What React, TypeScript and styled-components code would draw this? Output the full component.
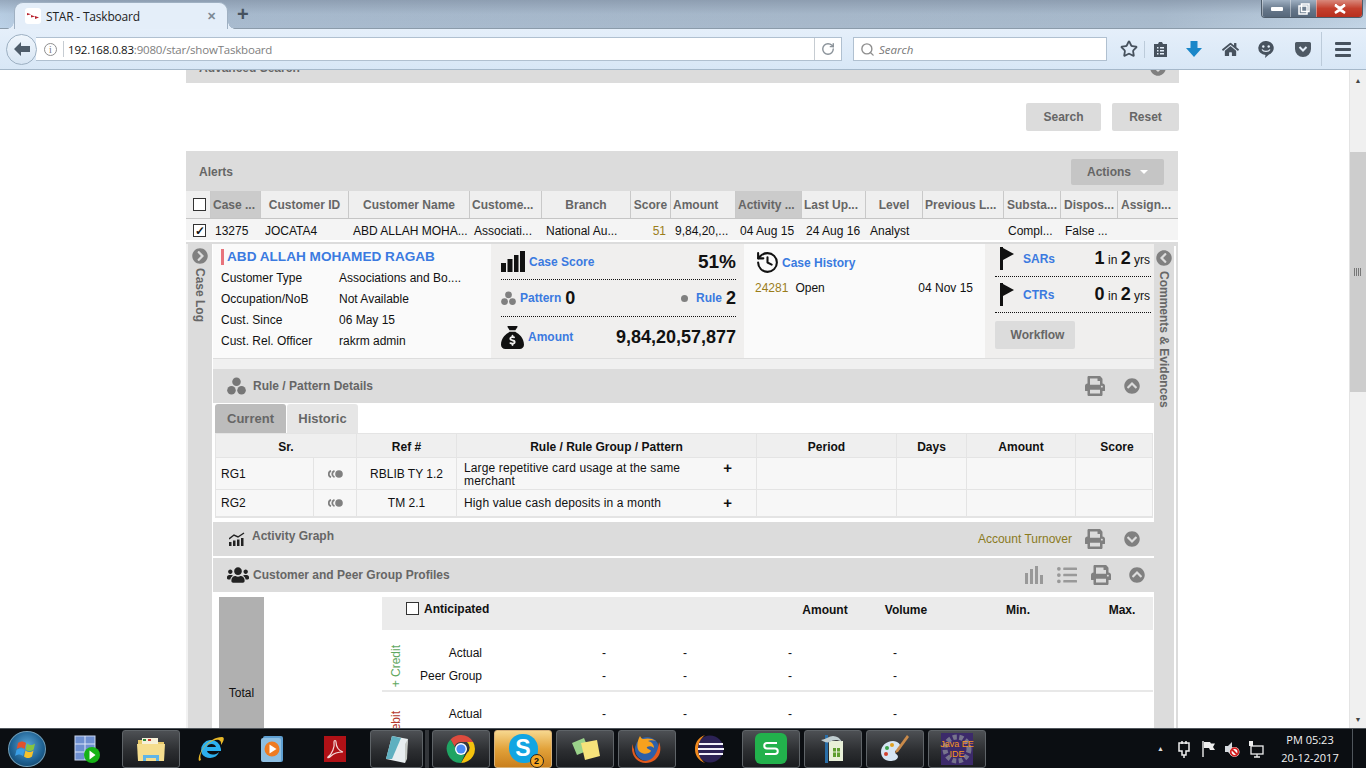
import React from 'react'
import styled, { createGlobalStyle } from 'styled-components'
import {
  FaChevronCircleDown,
  FaChevronCircleLeft,
  FaChevronCircleRight,
  FaChevronCircleUp,
  FaHome,
  FaListUl,
  FaPrint,
  FaUsers,
} from 'react-icons/fa'
import { FaSackDollar } from 'react-icons/fa6'
import { History, RotateCw, Search as SearchGlass, Star } from 'lucide-react'

const GlobalStyle = createGlobalStyle`
  html, body {
    margin: 0;
    padding: 0;
    height: 100%;
    overflow: hidden;
    background: #fff;
  }
  * { box-sizing: border-box; }
`

const columns = '24px 50px 88px 121px 72px 89px 40px 65px 66px 64px 57px 81px 57px 57px 57px 1fr'

const headers = [
  { text: 'Case ...', sorted: true, left: true },
  { text: 'Customer ID' },
  { text: 'Customer Name' },
  { text: 'Custome...', left: true },
  { text: 'Branch' },
  { text: 'Score' },
  { text: 'Amount', left: true },
  { text: 'Activity ...', sorted: true, left: true },
  { text: 'Last Up...', left: true },
  { text: 'Level' },
  { text: 'Previous L...', left: true },
  { text: 'Substa...' },
  { text: 'Dispos...' },
  { text: 'Assign...' },
]

const rowValues = [
  '13275',
  'JOCATA4',
  'ABD ALLAH MOHA...',
  'Associati...',
  'National Au...',
  '51',
  '9,84,20,...',
  '04 Aug 15',
  '24 Aug 16',
  'Analyst',
  '',
  'Compl...',
  'False ...',
  '',
]

const customerFacts = [
  ['Customer Type', 'Associations and Bo....'],
  ['Occupation/NoB', 'Not Available'],
  ['Cust. Since', '06 May 15'],
  ['Cust. Rel. Officer', 'rakrm admin'],
]

const rules = [
  { sr: 'RG1', ref: 'RBLIB TY 1.2', rule: 'Large repetitive card usage at the same merchant', h: 32 },
  { sr: 'RG2', ref: 'TM 2.1', rule: 'High value cash deposits in a month', h: 27 },
]

export default function App() {
  return (
    <Screen>
      <GlobalStyle />
      <TabStrip>
        <Tab>
          <Favicon>
            <svg width="12" height="8" viewBox="0 0 12 8">
              <path d="M0 1l4 1.2-4 1zM4 3l4 1.4-4 1.2zM8 4l4 1.4-4 1.6z" fill="#b8202c" />
            </svg>
          </Favicon>
          <TabTitle>STAR - Taskboard</TabTitle>
          <TabClose>✕</TabClose>
        </Tab>
        <NewTab>+</NewTab>
        <WindowButtons>
          <WindowButton $w={28}>
            <svg width="12" height="4"><rect width="12" height="4" rx="1" fill="#fff" /></svg>
          </WindowButton>
          <WindowButton $w={26}>
            <svg width="12" height="12" viewBox="0 0 12 12" fill="none" stroke="#fff" strokeWidth="1.5">
              <rect x="1" y="3" width="8" height="8" fill="#6f8092" />
              <rect x="3.5" y="1" width="7.5" height="7.5" />
            </svg>
          </WindowButton>
          <WindowButton $w={46} $close>
            <svg width="14" height="10" viewBox="0 0 14 10">
              <path d="M2 1l5 3 5-3M2 9l5-3 5 3M2 1l10 8M12 1L2 9" stroke="#fff" strokeWidth="2.4" fill="none" />
            </svg>
          </WindowButton>
        </WindowButtons>
      </TabStrip>

      <NavBar>
        <BackButton>
          <svg width="18" height="16" viewBox="0 0 18 16">
            <path d="M8 1L1 8l7 7v-4h9V5H8z" fill="#4e5c6a" />
          </svg>
        </BackButton>
        <UrlBox>
          <InfoIcon>i</InfoIcon>
          <UrlDivider />
          <UrlHost>192.168.0.83</UrlHost>
          <UrlPath>:9080/star/showTaskboard</UrlPath>
          <ReloadCell>
            <RotateCw size={14} color="#8a9299" strokeWidth={2.4} />
          </ReloadCell>
        </UrlBox>
        <SearchBox>
          <SearchGlass size={15} color="#8e8e8e" strokeWidth={2.2} />
          <SearchHint>Search</SearchHint>
        </SearchBox>
        <ToolIcons>
          <ToolIcon $w={30}>
            <Star size={18} color="#47525e" strokeWidth={2.4} />
          </ToolIcon>
          <ToolDivider />
          <ToolIcon $w={30}>
            <svg width="15" height="17" viewBox="0 0 15 17">
              <path d="M1 3h4l1-2h3l1 2h4v13H1z" fill="#47525e" />
              <path d="M4 6h1.5v1.5H4zM7 6h4v1.5H7zM4 9h1.5v1.5H4zM7 9h4v1.5H7zM4 12h1.5v1.5H4zM7 12h4v1.5H7z" fill="#e4eef9" />
            </svg>
          </ToolIcon>
          <ToolIcon $w={37}>
            <svg width="16" height="16" viewBox="0 0 16 16">
              <path d="M4.5 0h7v7H16l-8 9-8-9h4.5z" fill="#1a87c9" />
            </svg>
          </ToolIcon>
          <ToolIcon $w={36}>
            <FaHome size={17} color="#47525e" />
          </ToolIcon>
          <ToolIcon $w={36}>
            <svg width="16" height="17" viewBox="0 0 16 17">
              <path d="M8 0a7.5 7 0 0 1 3 13.5L7 17l.5-3A7.5 7 0 0 1 8 0z" fill="#47525e" />
              <circle cx="5.3" cy="5.5" r="1.2" fill="#e4eef9" />
              <circle cx="10.7" cy="5.5" r="1.2" fill="#e4eef9" />
              <path d="M4 8.5c1.5 2.6 6.500 2.600 8 0" stroke="#e4eef9" strokeWidth="1.3" fill="none" />
            </svg>
          </ToolIcon>
          <ToolIcon $w={37}>
            <svg width="16" height="15" viewBox="0 0 16 15">
              <path d="M1.500 0h13A1.500 1.500 0 0 1 16 1.500V7A8 8 0 0 1 0 7V1.500A1.500 1.500 0 0 1 1.500 0z" fill="#4e5964" />
              <path d="M4.500 5L8 8.500 11.500 5" stroke="#e4eef9" strokeWidth="2" fill="none" />
            </svg>
          </ToolIcon>
          <ToolDivider $tall />
          <MenuIcon>
            <span />
            <span />
            <span />
          </MenuIcon>
        </ToolIcons>
      </NavBar>

      <Viewport>
        <Page>
          <PageColumn>
            <AdvancedBar>
              <AdvancedTitle>Advanced Search</AdvancedTitle>
              <FaChevronCircleDown size={16} color="#808080" />
            </AdvancedBar>
            <SearchActions>
              <GrayButton $w={75}>Search</GrayButton>
              <GrayButton $w={67}>Reset</GrayButton>
            </SearchActions>
            <AlertsPanel>
              <AlertsHead>
                <AlertsTitle>Alerts</AlertsTitle>
                <ActionsButton>
                  Actions
                  <Caret />
                </ActionsButton>
              </AlertsHead>
              <GridHead>
                <CheckCell>
                  <Checkbox />
                </CheckCell>
                {headers.map((h) => (
                  <HeadCell key={h.text} $sorted={h.sorted} $left={h.left}>
                    {h.text}
                  </HeadCell>
                ))}
              </GridHead>
              <GridRow>
                <CheckCell>
                  <Checkbox $checked>✓</Checkbox>
                </CheckCell>
                {rowValues.map((v, i) => (
                  <RowCell key={i} $score={v === '51'}>
                    {v}
                  </RowCell>
                ))}
              </GridRow>
              <RowGap />
              <AlertBody>
                <LeftRail>
                  <FaChevronCircleRight size={16} color="#808080" />
                  <RailText>Case Log</RailText>
                </LeftRail>
                <MainColumn>
                  <Summary>
                    <CustomerBlock>
                      <CustomerName>ABD ALLAH MOHAMED RAGAB</CustomerName>
                      {customerFacts.map(([label, value]) => (
                        <FactRow key={label}>
                          <FactLabel>{label}</FactLabel>
                          <span>{value}</span>
                        </FactRow>
                      ))}
                    </CustomerBlock>
                    <MetricsBlock>
                      <MetricRow $h={36} $line>
                        <MetricLeft>
                          <BarsIcon />
                          <BlueLink>Case Score</BlueLink>
                        </MetricLeft>
                        <BigValue>51%</BigValue>
                      </MetricRow>
                      <MetricRow $h={37} $line>
                        <MetricLeft>
                          <PatternIcon size={15} color="#808080" />
                          <BlueLink>Pattern</BlueLink>
                          <MidValue>0</MidValue>
                        </MetricLeft>
                        <MetricLeft>
                          <SmallDot />
                          <BlueLink>Rule</BlueLink>
                          <MidValue>2</MidValue>
                        </MetricLeft>
                      </MetricRow>
                      <MetricRow $h={40}>
                        <MetricLeft>
                          <FaSackDollar size={23} color="#111" />
                          <BlueLink>Amount</BlueLink>
                        </MetricLeft>
                        <MidValue>9,84,20,57,877</MidValue>
                      </MetricRow>
                    </MetricsBlock>
                    <HistoryBlock>
                      <HistoryHead>
                        <History size={25} color="#111" strokeWidth={2} />
                        <BlueLink>Case History</BlueLink>
                      </HistoryHead>
                      <HistoryRow>
                        <GoldText>24281</GoldText>
                        <HistoryStatus>Open</HistoryStatus>
                        <span>04 Nov 15</span>
                      </HistoryRow>
                    </HistoryBlock>
                    <FlagsBlock>
                      <FlagRow $h={33} $lift={3}>
                        <FlagIcon />
                        <BlueLink>SARs</BlueLink>
                        <FlagCount>
                          <b>1</b> in <b>2</b> yrs
                        </FlagCount>
                      </FlagRow>
                      <FlagRow $h={36} $lift={0}>
                        <FlagIcon />
                        <BlueLink>CTRs</BlueLink>
                        <FlagCount>
                          <b>0</b> in <b>2</b> yrs
                        </FlagCount>
                      </FlagRow>
                      <WorkflowButton>Workflow</WorkflowButton>
                    </FlagsBlock>
                  </Summary>
                  <Strip />
                  <SectionHead>
                    <SectionTitle $gap={7}>
                      <PatternIcon size={19} color="#777" />
                      <SectionLabel>Rule / Pattern Details</SectionLabel>
                    </SectionTitle>
                    <SectionTools>
                      <FaPrint size={20} color="#808080" />
                      <Spacer $w={19} />
                      <FaChevronCircleUp size={16} color="#808080" />
                      <Spacer $w={14} />
                    </SectionTools>
                  </SectionHead>
                  <Tabs>
                    <TabButton $active>Current</TabButton>
                    <TabButton>Historic</TabButton>
                  </Tabs>
                  <RuleTable>
                    <colgroup>
                      <col width="98" />
                      <col width="43" />
                      <col width="100" />
                      <col width="300" />
                      <col width="140" />
                      <col width="70" />
                      <col width="109" />
                      <col width="77" />
                    </colgroup>
                    <thead>
                      <tr>
                        <RuleHead colSpan={2}>Sr.</RuleHead>
                        <RuleHead>Ref #</RuleHead>
                        <RuleHead>Rule / Rule Group / Pattern</RuleHead>
                        <RuleHead>Period</RuleHead>
                        <RuleHead>Days</RuleHead>
                        <RuleHead>Amount</RuleHead>
                        <RuleHead $shift>Score</RuleHead>
                      </tr>
                    </thead>
                    <tbody>
                      {rules.map((r) => (
                        <RuleRow key={r.sr} $h={r.h}>
                          <RuleCell>{r.sr}</RuleCell>
                          <RuleCell $center>
                            <TrailDots />
                          </RuleCell>
                          <RuleCell $center>{r.ref}</RuleCell>
                          <RuleCell>
                            <RuleText>
                              <RuleWords>{r.rule}</RuleWords>
                              <PlusMark>+</PlusMark>
                            </RuleText>
                          </RuleCell>
                          <RuleCell />
                          <RuleCell />
                          <RuleCell />
                          <RuleCell />
                        </RuleRow>
                      ))}
                    </tbody>
                  </RuleTable>
                  <SectionHead $top={4}>
                    <SectionTitle $gap={7} $inset={2}>
                      <GraphIcon />
                      <SectionLabel $raise={6}>Activity Graph</SectionLabel>
                    </SectionTitle>
                    <SectionTools>
                      <TurnoverLink>Account Turnover</TurnoverLink>
                      <FaPrint size={20} color="#808080" />
                      <Spacer $w={19} />
                      <FaChevronCircleDown size={16} color="#808080" />
                      <Spacer $w={14} />
                    </SectionTools>
                  </SectionHead>
                  <SectionHead $top={2}>
                    <SectionTitle $gap={4}>
                      <FaUsers size={22} color="#222" />
                      <SectionLabel>Customer and Peer Group Profiles</SectionLabel>
                    </SectionTitle>
                    <SectionTools>
                      <ChartIcon />
                      <Spacer $w={14} />
                      <FaListUl size={20} color="#999" />
                      <Spacer $w={14} />
                      <FaPrint size={20} color="#808080" />
                      <Spacer $w={18} />
                      <FaChevronCircleUp size={16} color="#808080" />
                      <Spacer $w={9} />
                    </SectionTools>
                  </SectionHead>
                  <Profiles>
                    <TotalBlock>Total</TotalBlock>
                    <ProfileTable>
                      <AnticipatedBar>
                        <AnticipatedLabel>
                          <Checkbox />
                          Anticipated
                        </AnticipatedLabel>
                        <AnticipatedCol $w={74}>Amount</AnticipatedCol>
                        <AnticipatedCol $w={88}>Volume</AnticipatedCol>
                        <AnticipatedCol $w={136}>Min.</AnticipatedCol>
                        <AnticipatedCol $w={60} $gap={6}>Max.</AnticipatedCol>
                      </AnticipatedBar>
                      <ProfileGroup $head={12} $line>
                        <SideLabel $tone="#5fa85f">+ Credit</SideLabel>
                        <ProfileRowCells label="Actual" />
                        <ProfileRowCells label="Peer Group" />
                      </ProfileGroup>
                      <ProfileGroup $head={11}>
                        <SideLabel $tone="#b5392b" $top>- Debit</SideLabel>
                        <ProfileRowCells label="Actual" />
                        <ProfileRowCells label="Peer Group" />
                      </ProfileGroup>
                    </ProfileTable>
                  </Profiles>
                </MainColumn>
                <RightRail>
                  <FaChevronCircleLeft size={16} color="#808080" />
                  <RailText>Comments &amp; Evidences</RailText>
                </RightRail>
              </AlertBody>
            </AlertsPanel>
          </PageColumn>
        </Page>
        <Scrollbar>
          <ScrollArrow>▲</ScrollArrow>
          <ScrollThumb>
            <ScrollGrip />
          </ScrollThumb>
          <ScrollArrow $bottom>▼</ScrollArrow>
        </Scrollbar>
      </Viewport>

      <Taskbar>
        <StartOrb>
          <svg width="24" height="24" viewBox="0 0 24 24">
            <path d="M3 6c3-2 5-2 8 0l-1.300 6c-3-2-5-2-8 0z" fill="#e2512c" />
            <path d="M12 6.500c3 2 5 2 8 0l-1.300 6c-3 2-5 2-8 0z" fill="#86c440" />
            <path d="M1.500 13c3-2 5-2 8 0L8 19c-3-2-5-2-8 0z" fill="#3a9ee6" />
            <path d="M10.500 13.500c3 2 5 2 8 0L17 19.500c-3 2-5 2-8 0z" fill="#f6c22c" />
          </svg>
        </StartOrb>
        <TaskSlot>
          <svg width="26" height="30" viewBox="0 0 26 30">
            <rect x="1" y="2" width="20" height="24" fill="#6e8fd0" stroke="#c9d6f0" />
            <path d="M1 10h20M1 18h20M11 2v24" stroke="#dde6f8" />
            <circle cx="18" cy="21" r="8" fill="#16b316" />
            <path d="M15.500 16.500l6 4.500-6 4.500z" fill="#fff" />
          </svg>
        </TaskSlot>
        <TaskSlot $boxed $nudge={2}>
          <svg width="30" height="28" viewBox="0 0 30 28">
            <path d="M2 5h8l2 2h16v19H2z" fill="#e8c96a" />
            <rect x="6" y="3" width="16" height="6" fill="#f6f0d8" />
            <rect x="7" y="4" width="3" height="2" fill="#2e8b3a" />
            <rect x="12" y="4" width="3" height="2" fill="#cc3a30" />
            <path d="M1 9h28l-1 17H2z" fill="#f5dd8e" />
            <path d="M7 20h16v6h-3v-3H10v3H7z" fill="#5fb5e8" />
          </svg>
        </TaskSlot>
        <TaskSlot>
          <svg width="30" height="30" viewBox="0 0 30 30">
            <path d="M5 17a10 10 0 0 1 20-2v2H11c1 4 8 5 12 1-2 7-13 8-17 2z" fill="#2cb0ee" />
            <path d="M11 13h9c-1-4-8-4-9 0z" fill="#0b0e12" />
            <path d="M3 27C1 19 13 3 26 3c3 0 2 4-1 8C26 5 20 4 13 9 6 14 3 21 5 26z" fill="#e8b829" />
          </svg>
        </TaskSlot>
        <TaskSlot>
          <svg width="26" height="30" viewBox="0 0 26 30">
            <rect x="3" y="2" width="20" height="26" rx="2" fill="#5f9fd1" />
            <rect x="1" y="4" width="20" height="24" rx="2" fill="#8ebfe2" />
            <circle cx="12" cy="15" r="7.500" fill="#ef7b21" />
            <path d="M9.500 10.500l7 4.500-7 4.500z" fill="#fff" />
          </svg>
        </TaskSlot>
        <TaskSlot>
          <svg width="26" height="30" viewBox="0 0 26 30">
            <rect x="2" y="2" width="22" height="26" fill="#b01116" />
            <path d="M6 23c4-3 7-10 6-15 0-2 2-2 2 0 0 5 3 9 7 10-4 0-9 1-12 4-2 2-4 2-3 1z" fill="none" stroke="#f4d9d9" strokeWidth="1.200" />
          </svg>
        </TaskSlot>
        <TaskSlot $boxed $w={53} $nudge={2}>
          <svg width="28" height="30" viewBox="0 0 28 30">
            <path d="M9 2l16 3-3 24-19-4z" fill="#e8eef0" />
            <path d="M9 2l9 2L9 25l-6 0z" fill="#5fb0c0" />
            <path d="M22 10l3-5-1 20-2 4z" fill="#c5c9c5" />
          </svg>
        </TaskSlot>
        <Gripper />
        <TaskSlot $boxed>
          <svg width="30" height="30" viewBox="0 0 30 30">
            <path d="M15 1a14 14 0 0 1 12.100 7H15a7 7 0 0 0-6.500 4.500L4.500 5.500A14 14 0 0 1 15 1z" fill="#dd4b3e" />
            <path d="M27.100 8A14 14 0 0 1 15 29l6-10a7 7 0 0 0 0-11z" fill="#f4c20d" />
            <path d="M15 29A14 14 0 0 1 4.500 5.500L10 15a7 7 0 0 0 9 5z" fill="#1fa463" />
            <circle cx="15" cy="15" r="6" fill="#fff" />
            <circle cx="15" cy="15" r="4.600" fill="#4a8af4" />
          </svg>
        </TaskSlot>
        <TaskSlot $boxed $active>
          <SkypeBubble>
            S
            <SkypeBadge>2</SkypeBadge>
          </SkypeBubble>
        </TaskSlot>
        <TaskSlot $boxed>
          <svg width="32" height="28" viewBox="0 0 32 28">
            <path d="M3 8l12-5 5 12-12 5z" fill="#9bd28a" />
            <path d="M12 8l16-3 3 16-15 4z" fill="#f6e27a" />
          </svg>
        </TaskSlot>
        <TaskSlot $boxed>
          <svg width="32" height="32" viewBox="0 0 32 32">
            <circle cx="16" cy="16" r="12" fill="#2d5fa8" />
            <path d="M9 3c1 2 2 3 3 3 4-1 9-1 13 2-3-1-6-1-8 0 4 1 6 4 6 7-2-2-5-2-7-1-1 2 3 2 4 4-2 3-7 4-11 1C5 16 6 8 9 3z" fill="#f7a11e" />
            <path d="M28 9c3 7 1 14-4 18-6 4-14 4-19-1-4-4-5-11-3-15 0 3 0 4 1 5 0 6 5 12 12 12 7-1 12-8 13-19z" fill="#e45a1c" />
          </svg>
        </TaskSlot>
        <TaskSlot>
          <svg width="30" height="32" viewBox="0 0 30 32">
            <circle cx="16" cy="16" r="13.500" fill="#2c2255" />
            <path d="M11 2C3 5 1 11 1 16s2 11 10 14C6 26 4 21 4 16s2-10 7-14z" fill="#f28a1e" />
            <path d="M5 11h24M4 16h26M5 21h24" stroke="#f2f0fa" strokeWidth="2" />
          </svg>
        </TaskSlot>
        <TaskSlot $boxed>
          <svg width="32" height="31" viewBox="0 0 32 31">
            <rect width="32" height="31" rx="6" fill="#22b14c" />
            <path d="M22 10H12a2.700 2.700 0 0 0 0 5.500h8a2.700 2.700 0 0 1 0 5.500H10" stroke="#fff" strokeWidth="2" fill="none" />
          </svg>
        </TaskSlot>
        <TaskSlot $boxed>
          <svg width="28" height="32" viewBox="0 0 28 32">
            <path d="M6 2h3v28H6z" fill="#2a6fa8" />
            <path d="M10 8h14v20H10z" fill="#e8f0d8" />
            <path d="M14 15h7v9h-7z" fill="#5f9e2f" />
            <path d="M14 19h7M17.500 15v9" stroke="#e8f0d8" />
            <path d="M2 7c6-1 8-4 12-4s7 2 9 6c-5-3-9-2-12 0-3 1-6 0-9-2z" fill="#c0cdd0" />
          </svg>
        </TaskSlot>
        <TaskSlot $boxed>
          <svg width="30" height="30" viewBox="0 0 30 30">
            <path d="M13 7C6 7 1 12 1 18c0 5 4 9 9 9 4 0 7-1 8-4 0-3-3-3-3-5 0-2 3-2 5-3 2-4-2-8-7-8z" fill="#d5e4f2" />
            <circle cx="7" cy="14" r="2" fill="#3aa24a" />
            <circle cx="12" cy="11" r="2" fill="#e0a020" />
            <circle cx="6" cy="20" r="2" fill="#d2402f" />
            <path d="M27 1l2 2-11 15-3 1 1-3z" fill="#c98a4a" />
          </svg>
        </TaskSlot>
        <TaskSlot $boxed>
          <JavaTile>
            <JavaGear viewBox="0 0 32 32">
              <circle cx="16" cy="16" r="12" fill="none" stroke="#77748c" strokeWidth="5" strokeDasharray="4 2.500" />
            </JavaGear>
            <JavaLabel>
              Java EE
              <br />
              IDE
            </JavaLabel>
          </JavaTile>
        </TaskSlot>
        <Tray>
          <TrayArrow>▲</TrayArrow>
          <TrayIcon>
            <svg width="14" height="18" viewBox="0 0 14 18">
              <path d="M2 3h10v8H9v4H5v-4H2z" fill="none" stroke="#eee" strokeWidth="1.500" />
              <path d="M5 1v3M9 1v3M7 15v3" stroke="#eee" strokeWidth="1.500" />
            </svg>
          </TrayIcon>
          <TrayIcon>
            <svg width="14" height="18" viewBox="0 0 14 18">
              <path d="M2 1v16" stroke="#eee" strokeWidth="1.400" />
              <path d="M3 2h6l1 1.500h4L12 7l2 3h-5L8 8H3z" fill="#eee" />
            </svg>
          </TrayIcon>
          <TrayIcon>
            <svg width="16" height="18" viewBox="0 0 16 18">
              <path d="M1 6h3l4-4v14l-4-4H1z" fill="#d5d9de" />
              <circle cx="10.500" cy="12" r="5" fill="#fff" />
              <circle cx="10.500" cy="12" r="3.800" fill="none" stroke="#d21f1f" strokeWidth="1.800" />
              <path d="M8 9.500l5 5" stroke="#d21f1f" strokeWidth="1.800" />
            </svg>
          </TrayIcon>
          <TrayIcon>
            <svg width="16" height="18" viewBox="0 0 16 18">
              <rect x="3" y="6" width="12" height="8" fill="none" stroke="#eee" strokeWidth="1.300" />
              <path d="M6 17h6M9 14v3" stroke="#eee" strokeWidth="1.300" />
              <rect x="1" y="1" width="4" height="5" fill="#eee" />
            </svg>
          </TrayIcon>
          <Clock>
            <span>PM 05:23</span>
            <span>20-12-2017</span>
          </Clock>
          <ShowDesktop />
        </Tray>
      </Taskbar>
    </Screen>
  )
}

function ProfileRowCells({ label }: { label: string }) {
  return (
    <>
      <ProfileLabel>{label}</ProfileLabel>
      <ProfileDash>-</ProfileDash>
      <ProfileDash>-</ProfileDash>
      <ProfileDash>-</ProfileDash>
      <ProfileDash>-</ProfileDash>
    </>
  )
}

function PatternIcon({ size, color }: { size: number; color: string }) {
  return (
    <svg width={size} height={size} viewBox="0 0 20 20" fill={color}>
      <circle cx="10" cy="5" r="4.500" />
      <circle cx="4.700" cy="14" r="4.500" />
      <circle cx="15.300" cy="14" r="4.500" />
    </svg>
  )
}

function BarsIcon() {
  return (
    <svg width="24" height="21" viewBox="0 0 24 21" fill="#111">
      <rect x="0" y="12" width="5" height="9" />
      <rect x="6.500" y="8" width="5" height="13" />
      <rect x="13" y="4" width="4.500" height="17" />
      <rect x="19" y="0" width="5" height="21" />
    </svg>
  )
}

function FlagIcon() {
  return (
    <svg width="14" height="23" viewBox="0 0 14 23" fill="#111">
      <rect x="0" y="0" width="3" height="23" />
      <path d="M3 1l11 6L3 13z" />
    </svg>
  )
}

function GraphIcon() {
  return (
    <svg width="16" height="14" viewBox="0 0 16 14" fill="#222">
      <rect x="0" y="10" width="2.500" height="4" />
      <rect x="4" y="8.500" width="2.500" height="5.500" />
      <rect x="8" y="7.500" width="2.500" height="6.500" />
      <rect x="12" y="6" width="2.500" height="8" />
      <path d="M0 7l5-4 4 2 6-4" stroke="#222" strokeWidth="1.400" fill="none" />
    </svg>
  )
}

function ChartIcon() {
  return (
    <svg width="18" height="18" viewBox="0 0 18 18" fill="#999">
      <rect x="0" y="7" width="3" height="11" />
      <rect x="5" y="3" width="3" height="15" />
      <rect x="10" y="0" width="3" height="18" />
      <rect x="15" y="9" width="3" height="9" />
    </svg>
  )
}

function TrailDots() {
  return (
    <svg width="15" height="8" viewBox="0 0 15 8" fill="none">
      <path d="M3 .8a3.400 3.400 0 0 0 0 6.400" stroke="#808080" strokeWidth="1.800" />
      <path d="M6.500 .8a3.400 3.400 0 0 0 0 6.400" stroke="#808080" strokeWidth="1.800" />
      <circle cx="11" cy="4" r="3.800" fill="#808080" />
    </svg>
  )
}

const Screen = styled.div`
  display: flex;
  flex-direction: column;
  width: 1366px;
  height: 768px;
  overflow: hidden;
  font-family: 'Liberation Sans', Arial, sans-serif;
  font-size: 12px;
  color: #111;
`

const TabStrip = styled.div`
  display: flex;
  align-items: flex-end;
  flex: none;
  height: 29px;
  padding-left: 14px;
  border-bottom: 1px solid #8b9baa;
  background:
    linear-gradient(180deg, rgba(120, 135, 155, 0.55) 0%, rgba(150, 168, 188, 0.15) 50%, rgba(170, 186, 204, 0) 100%),
    linear-gradient(90deg, #bcd2e8 0%, #a9bcd0 5%, #a8b9cb 60%, #a9bbcd 85%, #c3d5e6 100%);
`

const Tab = styled.div`
  position: relative;
  display: flex;
  align-items: center;
  width: 214px;
  height: 27px;
  margin-bottom: -1px;
  padding: 0 11px 0 10px;
  background: #e4eef9;
  border: 1px solid #9fb0c2;
  border-bottom: none;
  border-radius: 9px 9px 0 0;
  &::before,
  &::after {
    content: '';
    position: absolute;
    bottom: 0;
    width: 7px;
    height: 7px;
  }
  &::before {
    left: -8px;
    background: radial-gradient(circle at 0 0, transparent 6.500px, #e4eef9 7px);
  }
  &::after {
    right: -8px;
    background: radial-gradient(circle at 100% 0, transparent 6.500px, #e4eef9 7px);
  }
`

const Favicon = styled.div`
  display: flex;
  align-items: center;
  justify-content: center;
  width: 16px;
  height: 16px;
  background: #fff;
  border-radius: 3px;
`

const TabTitle = styled.span`
  flex: 1;
  margin-left: 5px;
  font-family: 'Open Sans', sans-serif;
  font-size: 12px;
  letter-spacing: -0.2px;
  color: #222;
`

const TabClose = styled.span`
  font-size: 11px;
  font-weight: bold;
  color: #7d8994;
`

const NewTab = styled.span`
  margin: 0 0 3px 9px;
  font-family: 'Liberation Sans', sans-serif;
  font-size: 20px;
  font-weight: bold;
  line-height: 22px;
  color: #46525f;
`

const WindowButtons = styled.div`
  display: flex;
  align-self: flex-start;
  height: 18px;
  margin-left: auto;
  margin-right: 3px;
  border: 1px solid #4e5c6a;
  border-top: none;
  border-radius: 0 0 4px 4px;
  overflow: hidden;
`

const WindowButton = styled.div<{ $w: number; $close?: boolean }>`
  display: flex;
  align-items: center;
  justify-content: center;
  width: ${(p) => p.$w}px;
  border-left: 1px solid rgba(255, 255, 255, 0.4);
  background: ${(p) =>
    p.$close
      ? 'linear-gradient(180deg, #d9897c 0%, #c4402e 50%, #b8301f 100%)'
      : 'linear-gradient(180deg, #9fb0c2 0%, #66778a 55%, #56677a 100%)'};
`

const NavBar = styled.div`
  display: flex;
  align-items: center;
  flex: none;
  height: 41px;
  padding-left: 6px;
  background: linear-gradient(180deg, #e5effa 0%, #d8e7f6 100%);
  border-bottom: 1px solid #a5b8ca;
`

const BackButton = styled.div`
  z-index: 1;
  display: flex;
  align-items: center;
  justify-content: center;
  flex: none;
  width: 31px;
  height: 31px;
  background: linear-gradient(180deg, #f0f6fc, #d7e5f3);
  border: 1px solid #9db0c2;
  border-radius: 50%;
`

const UrlBox = styled.div`
  display: flex;
  align-items: center;
  width: 806px;
  height: 24px;
  margin-left: -1px;
  padding-left: 8px;
  background: #fff;
  border: 1px solid #b0c0d0;
  border-left: none;
  font-size: 12px;
`

const InfoIcon = styled.span`
  display: flex;
  align-items: center;
  justify-content: center;
  width: 13px;
  height: 13px;
  border: 1px solid #8f8f8f;
  border-radius: 50%;
  font-family: 'Liberation Serif', serif;
  font-size: 10px;
  color: #777;
`

const UrlDivider = styled.span`
  width: 1px;
  height: 16px;
  margin: 0 4px 0 6px;
  background: #c6ccd2;
`

const UrlHost = styled.span`
  font-family: 'Open Sans', sans-serif;
  font-size: 11.5px;
  letter-spacing: -0.2px;
  color: #111;
`

const UrlPath = styled.span`
  flex: 1;
  font-family: 'Open Sans', sans-serif;
  font-size: 11.5px;
  letter-spacing: -0.2px;
  color: #808080;
`

const ReloadCell = styled.span`
  display: flex;
  align-items: center;
  justify-content: center;
  width: 27px;
  height: 100%;
  border-left: 1px solid #c6ccd2;
`

const SearchBox = styled.div`
  display: flex;
  align-items: center;
  gap: 4px;
  width: 254px;
  height: 24px;
  margin-left: 11px;
  padding-left: 6px;
  background: #fff;
  border: 1px solid #b0c0d0;
`

const SearchHint = styled.span`
  font-family: 'Open Sans', sans-serif;
  font-size: 11.5px;
  font-style: italic;
  color: #777;
`

const ToolIcons = styled.div`
  display: flex;
  align-items: center;
  margin-left: 7px;
`

const ToolIcon = styled.span<{ $w: number }>`
  display: flex;
  align-items: center;
  justify-content: center;
  width: ${(p) => p.$w}px;
`

const ToolDivider = styled.span<{ $tall?: boolean }>`
  width: 1px;
  height: ${(p) => (p.$tall ? 34 : 17)}px;
  background: #bccbda;
`

const MenuIcon = styled.span`
  display: flex;
  flex-direction: column;
  gap: 3px;
  width: 16px;
  margin-left: 13px;
  & > span {
    height: 3px;
    background: #47525e;
    border-radius: 1px;
  }
`

const Viewport = styled.div`
  display: flex;
  flex: none;
  height: 658px;
  overflow: hidden;
`

const Page = styled.div`
  flex: 1;
  min-width: 0;
  padding-left: 186px;
  overflow: hidden;
  background: #fff;
`

const PageColumn = styled.div`
  width: 993px;
  margin-top: -21px;
`

const AdvancedBar = styled.div`
  display: flex;
  align-items: center;
  justify-content: space-between;
  height: 34px;
  padding: 3px 13px 0;
  background: #dcdcdc;
`

const AdvancedTitle = styled.span`
  font-weight: bold;
  color: #666;
`

const SearchActions = styled.div`
  display: flex;
  justify-content: flex-end;
  gap: 11px;
  margin-top: 20px;
`

const GrayButton = styled.button<{ $w: number }>`
  width: ${(p) => p.$w}px;
  height: 28px;
  padding: 0;
  background: #dcdcdc;
  border: none;
  border-radius: 2px;
  font-family: inherit;
  font-size: 12px;
  font-weight: bold;
  color: #666;
`

const AlertsPanel = styled.section`
  width: 992px;
  margin-top: 20px;
  background: #dcdcdc;
`

const AlertsHead = styled.div`
  display: flex;
  align-items: center;
  justify-content: space-between;
  height: 40px;
  padding: 1px 14px 0 13px;
`

const AlertsTitle = styled.span`
  font-weight: bold;
  color: #666;
`

const ActionsButton = styled.button`
  display: flex;
  align-items: center;
  justify-content: center;
  gap: 9px;
  width: 93px;
  height: 26px;
  padding: 0;
  background: #c5c5c5;
  border: none;
  border-radius: 2px;
  font-family: inherit;
  font-size: 12px;
  font-weight: bold;
  color: #666;
`

const Caret = styled.span`
  width: 0;
  height: 0;
  border-left: 4px solid transparent;
  border-right: 4px solid transparent;
  border-top: 4px solid #fff;
`

const GridHead = styled.div`
  display: grid;
  grid-template-columns: ${columns};
  height: 28px;
  background: #efefef;
  border-bottom: 1px solid #c5c5c5;
`

const CheckCell = styled.div`
  display: flex;
  align-items: center;
  justify-content: center;
  padding-left: 3px;
`

const Checkbox = styled.span<{ $checked?: boolean }>`
  display: inline-flex;
  align-items: center;
  justify-content: center;
  flex: none;
  width: 13px;
  height: 13px;
  background: #fff;
  border: 1px solid #333;
  font-size: 12px;
  font-weight: bold;
  line-height: 1;
  color: #111;
`

const HeadCell = styled.div<{ $sorted?: boolean; $left?: boolean }>`
  display: flex;
  align-items: center;
  justify-content: ${(p) => (p.$left ? 'flex-start' : 'center')};
  padding-left: ${(p) => (p.$left ? 2 : 0)}px;
  background: ${(p) => (p.$sorted ? '#cbcbcb' : 'transparent')};
  border-left: 1px solid #c9c9c9;
  font-weight: bold;
  color: #666;
  white-space: nowrap;
  overflow: hidden;
`

const GridRow = styled.div`
  display: grid;
  grid-template-columns: ${columns};
  align-items: center;
  height: 21px;
  padding-top: 2px;
  background: #f4f4f4;
`

const RowCell = styled.div<{ $score?: boolean }>`
  padding: ${(p) => (p.$score ? '0 4px 0 0' : '0 0 0 5px')};
  color: ${(p) => (p.$score ? '#9a7d1a' : '#111')};
  text-align: ${(p) => (p.$score ? 'right' : 'left')};
  white-space: nowrap;
  overflow: hidden;
`

const RowGap = styled.div`
  height: 4px;
  background: #fff;
  border-bottom: 2px solid #dcdcdc;
`

const AlertBody = styled.div`
  display: flex;
  padding-right: 2px;
  border-left: 2px solid #f2f2f2;
  background: #dcdcdc;
`

const LeftRail = styled.aside`
  display: flex;
  flex-direction: column;
  align-items: center;
  flex: none;
  gap: 4px;
  width: 24px;
  padding-top: 4px;
  background: #dcdcdc;
`

const RightRail = styled.aside`
  display: flex;
  flex-direction: column;
  align-items: center;
  flex: none;
  gap: 5px;
  width: 22px;
  padding-top: 4px;
  margin-top: 2px;
  background: #dcdcdc;
  border-right: 2px solid #fff;
`

const RailText = styled.span`
  writing-mode: vertical-rl;
  font-weight: bold;
  color: #666;
  white-space: nowrap;
`

const MainColumn = styled.div`
  flex: 1;
  min-width: 0;
  background: #fff;
  padding-left: 1px;
`

const Summary = styled.div`
  display: flex;
  height: 115px;
  background: #fff;
  border-bottom: 1px solid #ddd;
`

const CustomerBlock = styled.div`
  width: 278px;
  padding: 5px 0 0 8px;
  background: #fafafa;
`

const CustomerName = styled.h2`
  height: 16px;
  margin: 0 0 2px;
  padding-left: 3px;
  border-left: 3px solid #e8747c;
  font-size: 13.6px;
  line-height: 15px;
  font-weight: bold;
  color: #3b7ae0;
  white-space: nowrap;
`

const FactRow = styled.div`
  display: flex;
  height: 21px;
  align-items: center;
`

const FactLabel = styled.span`
  width: 118px;
`

const MetricsBlock = styled.div`
  width: 253px;
  padding: 0 8px 0 10px;
  background: #f0efee;
`

const MetricRow = styled.div<{ $h: number; $line?: boolean }>`
  display: flex;
  align-items: center;
  justify-content: space-between;
  height: ${(p) => p.$h}px;
  border-bottom: ${(p) => (p.$line ? '1px dotted #111' : 'none')};
`

const MetricLeft = styled.div`
  display: flex;
  align-items: center;
  gap: 4px;
`

const BlueLink = styled.span`
  font-weight: bold;
  color: #3b7ae0;
  white-space: nowrap;
`

const BigValue = styled.span`
  font-size: 19px;
  font-weight: bold;
`

const MidValue = styled.span`
  font-size: 18px;
  font-weight: bold;
`

const SmallDot = styled.span`
  width: 7px;
  height: 7px;
  margin-right: 4px;
  background: #808080;
  border-radius: 50%;
`

const HistoryBlock = styled.div`
  width: 241px;
  padding: 6px 12px 0 11px;
  background: #fafafa;
`

const HistoryHead = styled.div`
  display: flex;
  align-items: center;
  gap: 2px;
  height: 25px;
`

const HistoryRow = styled.div`
  display: flex;
  justify-content: space-between;
  margin-top: 6px;
`

const GoldText = styled.span`
  color: #9a7d1a;
`

const HistoryStatus = styled.span`
  flex: 1;
  margin-left: 7px;
`

const FlagsBlock = styled.div`
  flex: 1;
  padding: 0 3px 0 10px;
  background: #f0efee;
`

const FlagRow = styled.div<{ $h: number; $lift: number }>`
  display: flex;
  align-items: center;
  gap: 9px;
  height: ${(p) => p.$h}px;
  padding: 0 1px ${(p) => p.$lift}px 5px;
  border-bottom: 1px dotted #111;
`

const FlagCount = styled.span`
  margin-left: auto;
  font-size: 12px;
  & > b {
    font-size: 18px;
  }
`

const WorkflowButton = styled.button`
  display: block;
  width: 80px;
  height: 28px;
  margin-top: 8px;
  padding: 0 0 0 5px;
  background: #dcdcdc;
  border: none;
  border-radius: 2px;
  font-family: inherit;
  font-size: 12px;
  font-weight: bold;
  color: #666;
`

const Strip = styled.div`
  height: 10px;
  background: #f0f0f0;
`

const SectionHead = styled.div<{ $top?: number }>`
  display: flex;
  align-items: center;
  justify-content: space-between;
  height: 34px;
  margin-top: ${(p) => p.$top ?? 0}px;
  padding-left: 14px;
  background: #dcdcdc;
`

const SectionTitle = styled.div<{ $gap: number; $inset?: number }>`
  display: flex;
  align-items: center;
  gap: ${(p) => p.$gap}px;
  padding-left: ${(p) => p.$inset ?? 0}px;
`

const SectionLabel = styled.span<{ $raise?: number }>`
  padding-bottom: ${(p) => p.$raise ?? 0}px;
  font-weight: bold;
  color: #666;
`

const SectionTools = styled.div`
  display: flex;
  align-items: center;
`

const Spacer = styled.span<{ $w: number }>`
  width: ${(p) => p.$w}px;
`

const TurnoverLink = styled.span`
  margin-right: 13px;
  color: #8a7a1e;
`

const Tabs = styled.div`
  display: flex;
  gap: 1px;
  height: 30px;
  padding: 1px 0 0 2px;
  background: #fff;
`

const TabButton = styled.div<{ $active?: boolean }>`
  display: flex;
  align-items: center;
  justify-content: center;
  width: 71px;
  background: ${(p) => (p.$active ? '#bcbcbc' : '#e6e6e6')};
  border-radius: 3px 3px 0 0;
  font-size: 13px;
  font-weight: bold;
  color: #666;
`

const RuleTable = styled.table`
  width: 937px;
  margin-left: 2px;
  border-collapse: collapse;
  table-layout: fixed;
  border-bottom: 2px solid #e4e4e4;
  border-top: 1px solid #e4e4e4;
`

const RuleHead = styled.th<{ $shift?: boolean }>`
  height: 24px;
  padding: ${(p) => (p.$shift ? '2px 0 0 6px' : '2px 0 0')};
  background: #efefef;
  border: 1px solid #e4e4e4;
  font-size: 12px;
  color: #111;
`

const RuleRow = styled.tr<{ $h: number }>`
  height: ${(p) => p.$h}px;
`

const RuleCell = styled.td<{ $center?: boolean }>`
  padding: 2px 0 0 ${(p) => (p.$center ? 0 : 5)}px;
  background: #f7f7f7;
  border: 1px solid #e4e4e4;
  line-height: 13px;
  text-align: ${(p) => (p.$center ? 'center' : 'left')};
`

const RuleText = styled.div`
  display: flex;
  align-items: flex-start;
  padding: 0 24px 0 2px;
`

const RuleWords = styled.span`
  flex: 1;
  margin-right: 26px;
  letter-spacing: 0.12px;
`

const PlusMark = styled.span`
  font-size: 15px;
  font-weight: bold;
  line-height: 11px;
`

const Profiles = styled.div`
  display: flex;
  padding: 5px 1px 0 6px;
  background: #fff;
`

const TotalBlock = styled.div`
  display: flex;
  align-items: center;
  justify-content: center;
  flex: none;
  width: 45px;
  height: 192px;
  background: #b0b0b0;
`

const ProfileTable = styled.div`
  flex: 1;
  margin-left: 118px;
`

const AnticipatedBar = styled.div`
  display: flex;
  align-items: flex-start;
  height: 33px;
  padding: 5px 0 0 24px;
  background: #ebebeb;
  font-weight: bold;
`

const AnticipatedLabel = styled.span`
  display: flex;
  align-items: center;
  gap: 5px;
  flex: none;
  width: 382px;
  white-space: nowrap;
`

const AnticipatedCol = styled.span<{ $w: number; $gap?: number }>`
  flex: none;
  width: ${(p) => p.$w}px;
  margin-left: ${(p) => p.$gap ?? 0}px;
  padding-top: 1px;
  text-align: center;
`

const ProfileGroup = styled.div<{ $head: number; $line?: boolean }>`
  display: grid;
  grid-template-columns: 28px 72px 124px 81px 105px 105px;
  grid-auto-rows: 23px;
  align-items: center;
  padding: ${(p) => p.$head}px 0 ${(p) => (p.$line ? 2 : 0)}px;
  border-bottom: ${(p) => (p.$line ? '2px solid #e8e8e8' : 'none')};
`

const SideLabel = styled.span<{ $tone: string; $top?: boolean }>`
  grid-row: 1 / span 2;
  grid-column: 1;
  justify-self: center;
  align-self: ${(p) => (p.$top ? 'start' : 'end')};
  margin-top: ${(p) => (p.$top ? 8 : 0)}px;
  writing-mode: vertical-rl;
  transform: rotate(180deg);
  color: ${(p) => p.$tone};
  white-space: nowrap;
`

const ProfileLabel = styled.span`
  grid-column: 2;
  text-align: right;
  white-space: nowrap;
`

const ProfileDash = styled.span`
  text-align: right;
`

const Scrollbar = styled.div`
  display: flex;
  flex-direction: column;
  flex: none;
  width: 17px;
  background: #f0f0f0;
  border-left: 1px solid #e4e4e4;
`

const ScrollArrow = styled.div<{ $bottom?: boolean }>`
  flex: none;
  height: 17px;
  margin-top: ${(p) => (p.$bottom ? 'auto' : '2px')};
  font-size: 7px;
  line-height: 17px;
  text-align: center;
  color: #444;
`

const ScrollThumb = styled.div`
  display: flex;
  align-items: center;
  justify-content: center;
  height: 240px;
  margin-top: 63px;
  background: #cdcdcd;
`

const ScrollGrip = styled.div`
  width: 8px;
  height: 8px;
  background: repeating-linear-gradient(90deg, #777 0 1px, transparent 1px 2px);
`

const Taskbar = styled.footer`
  display: flex;
  align-items: center;
  flex: none;
  height: 40px;
  background: #0b0e12;
  border-top: 1px solid #50565c;
`

const StartOrb = styled.div`
  display: flex;
  align-items: center;
  justify-content: center;
  flex: none;
  width: 38px;
  height: 36px;
  margin: 0 10px 0 8px;
  background: radial-gradient(circle at 50% 40%, #5aa7d8 0%, #1d5f90 60%, #0e3550 100%);
  border: 1px solid #6f9db8;
  border-radius: 50%;
`

const TaskSlot = styled.div<{ $boxed?: boolean; $active?: boolean; $w?: number; $nudge?: number }>`
  display: flex;
  align-items: center;
  justify-content: center;
  flex: none;
  width: ${(p) => p.$w ?? 58}px;
  height: 38px;
  margin: 0 ${(p) => 2 - (p.$w ? 0 : p.$nudge ?? 0)}px 0 ${(p) => 2 + (p.$nudge ?? 0)}px;
  border-radius: 3px;
  border: ${(p) => (p.$boxed ? `1px solid ${p.$active ? '#d8b27a' : '#5f6468'}` : '1px solid transparent')};
  background: ${(p) =>
    !p.$boxed
      ? 'transparent'
      : p.$active
        ? 'linear-gradient(180deg, #f6d78e 0%, #e2a23a 50%, #c97f1c 100%)'
        : 'linear-gradient(180deg, #4d5054 0%, #2c2e31 55%, #1a1c1f 100%)'};
`

const Gripper = styled.div`
  flex: none;
  width: 4px;
  height: 38px;
  margin-right: 1px;
  background: #33363a;
`

const SkypeBubble = styled.div`
  position: relative;
  display: flex;
  align-items: center;
  justify-content: center;
  width: 29px;
  height: 29px;
  background: #12a5e2;
  border-radius: 45% 50% 45% 50%;
  font-size: 23px;
  font-weight: bold;
  color: #fff;
`

const SkypeBadge = styled.span`
  position: absolute;
  right: -6px;
  bottom: -5px;
  width: 14px;
  height: 14px;
  background: #f6a623;
  border: 1px solid #222;
  border-radius: 50%;
  font-size: 9px;
  line-height: 12px;
  text-align: center;
  color: #111;
`

const JavaTile = styled.div`
  position: relative;
  display: flex;
  align-items: center;
  justify-content: center;
  width: 32px;
  height: 32px;
  background: #3c2a6a;
`

const JavaGear = styled.svg`
  position: absolute;
  inset: 0;
`

const JavaLabel = styled.span`
  position: relative;
  font-size: 9px;
  line-height: 10px;
  text-align: center;
  white-space: nowrap;
  color: #f7941e;
`

const Tray = styled.div`
  display: flex;
  align-items: center;
  flex: 1;
  height: 100%;
  padding-left: 169px;
`

const TrayArrow = styled.span`
  width: 15px;
  font-size: 7px;
  color: #ddd;
`

const TrayIcon = styled.span`
  display: flex;
  align-items: center;
  justify-content: center;
  width: 24px;
`

const Clock = styled.div`
  display: flex;
  flex-direction: column;
  align-items: center;
  flex: 1;
  gap: 4px;
  font-family: 'Open Sans', sans-serif;
  font-size: 11px;
  line-height: 14px;
  color: #f2f2f2;
`

const ShowDesktop = styled.div`
  flex: none;
  width: 14px;
  height: 100%;
  border-left: 1px solid #50565c;
`
